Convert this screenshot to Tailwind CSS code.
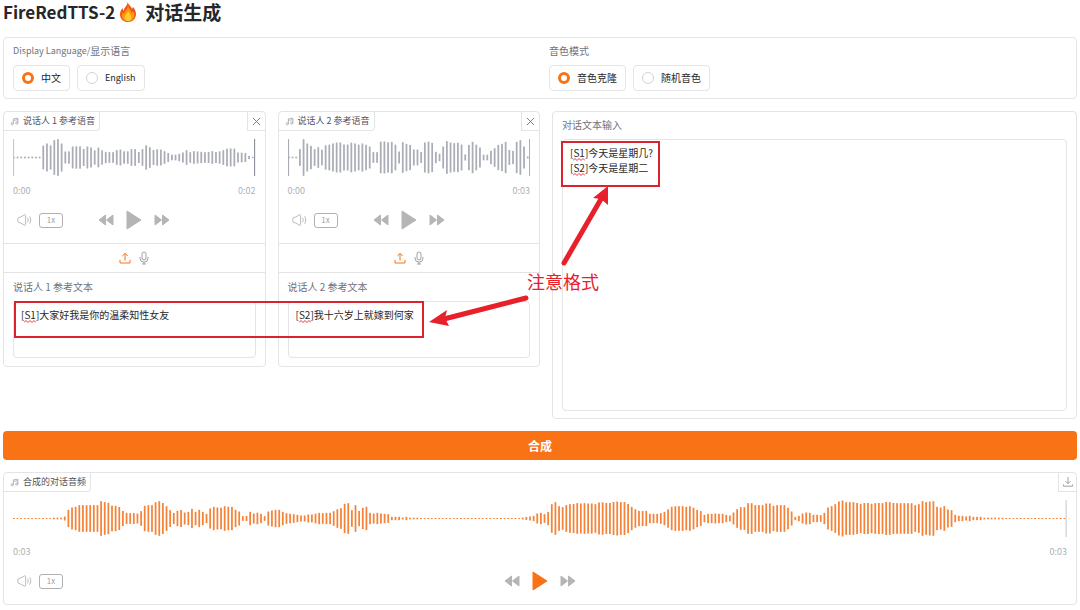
<!DOCTYPE html>
<html lang="zh-CN">
  <head>
    <meta charset="UTF-8" />
    <meta name="viewport" content="width=device-width, initial-scale=1.0" />
    <title>FireRedTTS-2 对话生成</title>
    <script src="https://cdn.jsdelivr.net/npm/@tailwindcss/browser@4"></script>
  </head>

  <body class="bg-white text-[10px] leading-[14px] text-zinc-800 font-['Noto_Sans_CJK_SC',sans-serif]">
    <!-- ========== Icons ========== -->
    <svg class="hidden">
      <symbol id="icon-music" viewBox="0 0 24 24">
        <path d="M9 18V5l12-2v13M9 9l12-2" />
        <circle cx="6" cy="18" r="3" />
        <circle cx="18" cy="16" r="3" />
      </symbol>
      <symbol id="icon-close" viewBox="0 0 10 10"><path d="M1 1l8 8M9 1L1 9" /></symbol>
      <symbol id="icon-download" viewBox="0 0 10 10"><path d="M5 0v6.500M2.500 4.200L5 6.700l2.500-2.500M.5 7.500v1.700h9V7.500" /></symbol>
      <symbol id="icon-volume" viewBox="0 0 16 13">
        <path d="M.8 5.200c0-1 .5-1.300 1.300-1.500l1.700-.4L8 .9c.6-.3 1.200 0 1.200.7v9.800c0 .7-.6 1-1.200.7L3.800 9.700l-1.700-.4C1.300 9.100.8 8.800.8 7.800zM11.300 4c.9 1.500.9 3.500 0 5M13.600 2.500c1.600 2.400 1.600 5.600 0 8" />
      </symbol>
      <symbol id="icon-rewind" viewBox="0 0 16 12">
        <path d="M7.500 1v10L1 6zM15 1v10L8.500 6z" />
      </symbol>
      <symbol id="icon-forward" viewBox="0 0 16 12">
        <path d="M1 1v10l6.500-5zM8.500 1v10L15 6z" />
      </symbol>
      <symbol id="icon-play" viewBox="0 0 16 20"><path d="M1 1v18l14-9z" /></symbol>
      <symbol id="icon-upload" viewBox="0 0 12 12"><path d="M6 8.500V1.500M3.300 4L6 1.300 8.700 4M1 7.800v3.200h10V7.800" /></symbol>
      <symbol id="icon-mic" viewBox="0 0 10 14">
        <rect x="3" y="1" width="4" height="8" rx="2" />
        <path d="M1 6v1.200a4 4 0 0 0 8 0V6M5 11.200V13M3 13h4" />
      </symbol>
      <symbol id="squiggle" viewBox="0 0 12 3"><path d="M0 2.500l2-2 2 2 2-2 2 2 2-2 2 2" /></symbol>
    </svg>

    <div class="relative px-[3px]">
      <!-- ========== Title ========== -->
      <h1 class="flex items-center text-[19px] leading-6 font-bold mb-[13px]">
        <span class="text-[17px]">FireRedTTS-2</span>
        <svg class="w-[18px] h-5 ml-1 mr-2" viewBox="0 0 18 20">
          <path fill="#f4511e" d="M8.500 0c.6 2.500 3.500 4 4.600 7 .5-.7.6-1.500.5-2.300 2.200 2 3.400 4.600 3.400 7.600 0 4.500-3.500 7.700-8 7.700s-8-3.200-8-7.600c0-2.700 1.300-4.600 2.700-6.300 0 1.200.3 2.100.9 2.800C5 5.500 8.800 3.500 8.500 0z" />
          <path fill="#ff9800" d="M9 3.500c.3 2.500 3.200 4.800 3.900 7.500.5-.4.900-.9 1.100-1.500 1.200 1.300 1.600 2.700 1.400 4.200-.4 3.200-3 5.600-6.400 5.600-3.500 0-6.200-2.500-6.200-5.800 0-1.400.4-2.600 1.100-3.600.2.900.6 1.500 1.200 1.900C5.300 8.700 9 7.500 9 3.500z" />
          <path fill="#ffc93c" d="M9 8.500c.2 2 3.300 4.200 3.300 6.900 0 2-1.400 3.500-3.300 3.500s-3.400-1.400-3.400-3.400C5.600 13.100 8.700 11.500 9 8.500z" />
        </svg>
        对话生成
      </h1>

      <!-- ========== Options ========== -->
      <section class="grid grid-cols-2 gap-x-[18px] border border-zinc-200 rounded-sm px-[9px] pt-1.5 pb-[7px] mb-3">
        <fieldset>
          <legend class="flex items-center h-3.5 text-zinc-500 mb-[7px]"><span class="text-[9px]">Display Language/</span>显示语言</legend>
          <div class="flex gap-[7px]">
            <label class="flex items-center gap-[7px] h-[26px] border border-zinc-200 rounded-sm px-2">
              <input type="radio" name="language" checked class="appearance-none size-3 rounded-full border border-zinc-300 checked:border-[3px] checked:border-[#f97316]" />
              中文
            </label>
            <label class="flex items-center gap-[7px] h-[26px] border border-zinc-200 rounded-sm px-2">
              <input type="radio" name="language" class="appearance-none size-3 rounded-full border border-zinc-300 checked:border-[3px] checked:border-[#f97316]" />
              <span class="text-[9px]">English</span>
            </label>
          </div>
        </fieldset>
        <fieldset>
          <legend class="flex items-center h-3.5 text-zinc-500 mb-[7px]">音色模式</legend>
          <div class="flex gap-[7px]">
            <label class="flex items-center gap-[7px] h-[26px] border border-zinc-200 rounded-sm px-2">
              <input type="radio" name="voice" checked class="appearance-none size-3 rounded-full border border-zinc-300 checked:border-[3px] checked:border-[#f97316]" />
              音色克隆
            </label>
            <label class="flex items-center gap-[7px] h-[26px] border border-zinc-200 rounded-sm px-2">
              <input type="radio" name="voice" class="appearance-none size-3 rounded-full border border-zinc-300 checked:border-[3px] checked:border-[#f97316]" />
              随机音色
            </label>
          </div>
        </fieldset>
      </section>

      <main class="grid grid-cols-[1fr_1fr_2fr] items-start gap-x-3">
        <!-- ========== Speaker 1 ========== -->
        <section class="border border-zinc-200 rounded-sm">
          <div class="flex justify-between h-[19px]">
            <h2 class="flex items-center gap-1 text-[9px] text-zinc-600 border-r border-b border-zinc-200 rounded-br-sm pl-1.5 pr-1">
              <svg class="size-[9px] fill-none stroke-zinc-400 stroke-2"><use href="#icon-music" /></svg>
              说话人 1 参考语音
            </h2>
            <button aria-label="清除" class="flex items-center justify-center w-[18px] border-l border-b border-zinc-200">
              <svg class="size-[9px] fill-none stroke-zinc-500"><use href="#icon-close" /></svg>
            </button>
          </div>
          <div class="px-[9px] pt-2 pb-[13px]">
            <svg id="wave-1" class="block w-full h-[37px] fill-[#abadb6]" preserveAspectRatio="none"></svg>
            <div class="flex justify-between text-[9px] text-[#b0b0b6] mt-2">
              <span>0:00</span>
              <span>0:02</span>
            </div>
            <div class="grid grid-cols-[1fr_auto_1fr] items-center h-5 mt-3">
              <div class="flex items-center gap-[7px] pl-1">
                <button aria-label="音量"><svg class="block w-[15px] h-3 fill-none stroke-[#b5b5b8]"><use href="#icon-volume" /></svg></button>
                <button class="w-6 h-[15px] border border-[#b0b0b6] rounded-[3px] text-[8px] leading-3 text-zinc-400">1x</button>
              </div>
              <div class="flex items-center gap-3">
                <button aria-label="后退"><svg class="block w-4 h-3 fill-[#b5b5b8] stroke-[#b5b5b8]" stroke-linejoin="round"><use href="#icon-rewind" /></svg></button>
                <button aria-label="播放"><svg class="block w-4 h-5 fill-[#b5b5b8] stroke-[#b5b5b8]" stroke-linejoin="round"><use href="#icon-play" /></svg></button>
                <button aria-label="前进"><svg class="block w-4 h-3 fill-[#b5b5b8] stroke-[#b5b5b8]" stroke-linejoin="round"><use href="#icon-forward" /></svg></button>
              </div>
            </div>
          </div>
          <div class="flex items-center justify-center gap-2 h-[30px] border-y border-zinc-200">
            <button aria-label="上传"><svg class="block size-3 fill-none stroke-[#f97316]"><use href="#icon-upload" /></svg></button>
            <button aria-label="录音"><svg class="block w-2.5 h-3.5 fill-none stroke-zinc-400"><use href="#icon-mic" /></svg></button>
          </div>
          <div class="px-[9px] pt-[7px] pb-2">
            <label for="text-1" class="block text-zinc-500 mb-[7px]">说话人 1 参考文本</label>
            <div class="relative">
              <textarea id="text-1" spellcheck="false" class="block w-full h-[57px] resize-none border border-zinc-200 rounded-sm px-[7px] py-[5px] leading-[15px]">[S1]大家好我是你的温柔知性女友</textarea>
              <svg class="absolute left-[11px] top-[19px] w-3 h-[3px] fill-none stroke-red-500"><use href="#squiggle" /></svg>
            </div>
          </div>
        </section>

        <!-- ========== Speaker 2 ========== -->
        <section class="border border-zinc-200 rounded-sm">
          <div class="flex justify-between h-[19px]">
            <h2 class="flex items-center gap-1 text-[9px] text-zinc-600 border-r border-b border-zinc-200 rounded-br-sm pl-1.5 pr-1">
              <svg class="size-[9px] fill-none stroke-zinc-400 stroke-2"><use href="#icon-music" /></svg>
              说话人 2 参考语音
            </h2>
            <button aria-label="清除" class="flex items-center justify-center w-[18px] border-l border-b border-zinc-200">
              <svg class="size-[9px] fill-none stroke-zinc-500"><use href="#icon-close" /></svg>
            </button>
          </div>
          <div class="px-[9px] pt-2 pb-[13px]">
            <svg id="wave-2" class="block w-full h-[37px] fill-[#abadb6]" preserveAspectRatio="none"></svg>
            <div class="flex justify-between text-[9px] text-[#b0b0b6] mt-2">
              <span>0:00</span>
              <span>0:03</span>
            </div>
            <div class="grid grid-cols-[1fr_auto_1fr] items-center h-5 mt-3">
              <div class="flex items-center gap-[7px] pl-1">
                <button aria-label="音量"><svg class="block w-[15px] h-3 fill-none stroke-[#b5b5b8]"><use href="#icon-volume" /></svg></button>
                <button class="w-6 h-[15px] border border-[#b0b0b6] rounded-[3px] text-[8px] leading-3 text-zinc-400">1x</button>
              </div>
              <div class="flex items-center gap-3">
                <button aria-label="后退"><svg class="block w-4 h-3 fill-[#b5b5b8] stroke-[#b5b5b8]" stroke-linejoin="round"><use href="#icon-rewind" /></svg></button>
                <button aria-label="播放"><svg class="block w-4 h-5 fill-[#b5b5b8] stroke-[#b5b5b8]" stroke-linejoin="round"><use href="#icon-play" /></svg></button>
                <button aria-label="前进"><svg class="block w-4 h-3 fill-[#b5b5b8] stroke-[#b5b5b8]" stroke-linejoin="round"><use href="#icon-forward" /></svg></button>
              </div>
            </div>
          </div>
          <div class="flex items-center justify-center gap-2 h-[30px] border-y border-zinc-200">
            <button aria-label="上传"><svg class="block size-3 fill-none stroke-[#f97316]"><use href="#icon-upload" /></svg></button>
            <button aria-label="录音"><svg class="block w-2.5 h-3.5 fill-none stroke-zinc-400"><use href="#icon-mic" /></svg></button>
          </div>
          <div class="px-[9px] pt-[7px] pb-2">
            <label for="text-2" class="block text-zinc-500 mb-[7px]">说话人 2 参考文本</label>
            <div class="relative">
              <textarea id="text-2" spellcheck="false" class="block w-full h-[57px] resize-none border border-zinc-200 rounded-sm px-[7px] py-[5px] leading-[15px]">[S2]我十六岁上就嫁到何家</textarea>
              <svg class="absolute left-[11px] top-[19px] w-3 h-[3px] fill-none stroke-red-500"><use href="#squiggle" /></svg>
            </div>
          </div>
        </section>

        <!-- ========== Dialogue text ========== -->
        <section class="border border-zinc-200 rounded-sm px-[9px] pt-1.5 pb-[7px]">
          <label for="dialogue" class="block text-zinc-500 mb-[7px]">对话文本输入</label>
          <div class="relative">
            <textarea id="dialogue" spellcheck="false" class="block w-full h-[272px] resize-none border border-zinc-200 rounded-sm px-[7px] py-[5px] leading-[15px]">[S1]今天是星期几?
[S2]今天是星期二</textarea>
            <svg class="absolute left-[11px] top-[19px] w-3 h-[3px] fill-none stroke-red-500"><use href="#squiggle" /></svg>
            <svg class="absolute left-[11px] top-[34px] w-3 h-[3px] fill-none stroke-red-500"><use href="#squiggle" /></svg>
          </div>
        </section>
      </main>

      <button class="block w-full h-[29px] my-3 rounded-sm bg-[#f97316] text-white text-xs font-bold">合成</button>

      <!-- ========== Generated audio ========== -->
      <section class="border border-zinc-200 rounded-sm">
        <div class="flex justify-between h-[19px]">
          <h2 class="flex items-center gap-1 text-[9px] text-zinc-600 border-r border-b border-zinc-200 rounded-br-sm pl-1.5 pr-1">
            <svg class="size-[9px] fill-none stroke-zinc-400 stroke-2"><use href="#icon-music" /></svg>
            合成的对话音频
          </h2>
          <button aria-label="下载" class="flex items-center justify-center w-[18px] border-l border-b border-zinc-200">
            <svg class="size-2.5 fill-none stroke-zinc-400"><use href="#icon-download" /></svg>
          </button>
        </div>
        <div class="px-[9px] pt-2 pb-[13px]">
          <svg id="wave-3" class="block w-full h-[37px] fill-[#f58237]" preserveAspectRatio="none"></svg>
          <div class="flex justify-between text-[9px] text-[#b0b0b6] mt-2">
            <span>0:03</span>
            <span>0:03</span>
          </div>
          <div class="grid grid-cols-[1fr_auto_1fr] items-center h-5 mt-3">
            <div class="flex items-center gap-[7px] pl-1">
              <button aria-label="音量"><svg class="block w-[15px] h-3 fill-none stroke-[#b5b5b8]"><use href="#icon-volume" /></svg></button>
              <button class="w-6 h-[15px] border border-[#b0b0b6] rounded-[3px] text-[8px] leading-3 text-zinc-400">1x</button>
            </div>
            <div class="flex items-center gap-3">
              <button aria-label="后退"><svg class="block w-4 h-3 fill-[#b5b5b8] stroke-[#b5b5b8]" stroke-linejoin="round"><use href="#icon-rewind" /></svg></button>
              <button aria-label="播放"><svg class="block w-4 h-5 fill-[#f97316] stroke-[#f97316]" stroke-linejoin="round"><use href="#icon-play" /></svg></button>
              <button aria-label="前进"><svg class="block w-4 h-3 fill-[#b5b5b8] stroke-[#b5b5b8]" stroke-linejoin="round"><use href="#icon-forward" /></svg></button>
            </div>
          </div>
        </div>
      </section>

      <!-- ========== Annotations ========== -->
      <div class="absolute left-[14px] top-[301px] w-[410px] h-[37px] border-2 border-[#d9232e] pointer-events-none"></div>
      <div class="absolute left-[561px] top-[141px] w-[99px] h-[46px] border-2 border-[#d9232e] pointer-events-none"></div>
      <svg class="absolute left-[424px] top-[180px] w-[200px] h-[150px] fill-[#e8202a] stroke-[#e8202a] pointer-events-none" viewBox="424 180 200 150">
        <path fill="none" stroke-width="5" stroke-linecap="round" d="M564 263L601 199M526 298L444 319" />
        <path stroke="none" d="M608 186l-15 12 8 1 7 6zM429 322l18-12-2 8 4 8z" />
      </svg>
      <p class="absolute left-[527px] top-[269px] text-lg leading-6 text-[#e8202a] pointer-events-none">注意格式</p>
    </div>

    <!-- ========== Waveforms ========== -->
    <script>
      const dots = (n, h = 3) => Array(n).fill(h);

      const wave1 = [
        ...dots(8, 5), 71, 84, 73, 104, 110, 84, 36, 37, 66, 67, 67, 51, 66, 60, 43, 59, 43, 34, 32, 32, 44, 48, 37,
        37, 50, 50, 33, 50, 73, 62, 45, 49, 48, 38, 27, 17, 17, 22, 30, 44, 32, 38, 36, 34, 32, 33, 38, 33, 37, 44, 53,
        54, 53, 30, 29, 27, 10, 4,
      ];
      const wave2 = [
        5, 5, 5, 50, 110, 84, 70, 50, 62, 47, 73, 77, 84, 90, 90, 78, 78, 89, 84, 77, 84, 76, 66, 32, 32, 95, 96, 91,
        94, 77, 36, 92, 82, 76, 48, 47, 33, 90, 95, 88, 34, 22, 66, 98, 90, 86, 88, 78, 18, 76, 94, 77, 60, 17, 17, 40,
        56, 76, 82, 94, 45, 40, 94, 104, 66, 6,
      ];
      const wave3 = [
        ...dots(11), 5, 5, 5, 12, 52, 66, 70, 80, 80, 80, 80, 80, 80, 104, 98, 94, 77, 76, 69, 45, 34, 32, 33, 30, 44,
        76, 80, 80, 98, 104, 93, 74, 50, 33, 46, 51, 36, 40, 58, 40, 52, 40, 28, 60, 70, 66, 65, 74, 70, 70, 52, 42,
        14, 15, 40, 30, 35, 28, 14, 42, 48, 52, 52, 40, 32, 29, 26, 22, 18, 18, 24, 24, 29, 34, 32, 34, 34, 44, 56,
        62, 88, 92, 50, 80, 46, 64, 70, 34, 30, 34, 30, 28, 26, 10, 10, 10, 6, 10, 5, 5, 5, ...dots(28), 6, 9, 12, 16,
        30, 34, 26, 40, 86, 98, 74, 68, 80, 86, 87, 92, 90, 92, 90, 90, 86, 96, 97, 93, 93, 99, 102, 98, 99, 87, 70,
        56, 46, 45, 46, 28, 28, 28, 32, 40, 55, 70, 74, 74, 74, 70, 74, 65, 52, 44, 22, 28, 28, 30, 28, 28, 22, 18, 36,
        56, 68, 68, 92, 92, 80, 80, 80, 90, 90, 76, 80, 80, 80, 64, 42, 10, 16, 30, 36, 34, 22, 22, 20, 34, 66, 74, 86,
        102, 108, 98, 98, 98, 93, 88, 93, 93, 88, 92, 93, 92, 99, 98, 93, 92, 92, 92, 92, 92, 80, 86, 104, 98, 102,
        104, 70, 66, 74, 54, 50, 22, 16, 16, 12, 16, 10, 10, 10, ...dots(6, 5), ...dots(17),
      ];

      // every bar has a pitch of 5 units, a bit more than half of it is gap
      function drawWave(id, bars, cursors) {
        const svg = document.getElementById(id);
        const width = bars.length * 5;
        svg.setAttribute("viewBox", `0 0 ${width} 111`);
        svg.innerHTML =
          bars.map((h, i) => `<rect x="${i * 5}" y="${(111 - h) / 2}" width="2.4" height="${h}" />`).join("") +
          cursors
            .map(([side, color]) => `<rect x="${side === "start" ? 0 : width - 2}" width="1.5" height="111" fill="${color}" />`)
            .join("");
      }

      drawWave("wave-1", wave1, [["start", "#c4c6cc"], ["end", "#8b8f99"]]);
      drawWave("wave-2", wave2, [["start", "#a9abb5"], ["end", "#a9abb5"]]);
      drawWave("wave-3", wave3, [["end", "#c9ccd6"]]);
    </script>
  </body>
</html>
